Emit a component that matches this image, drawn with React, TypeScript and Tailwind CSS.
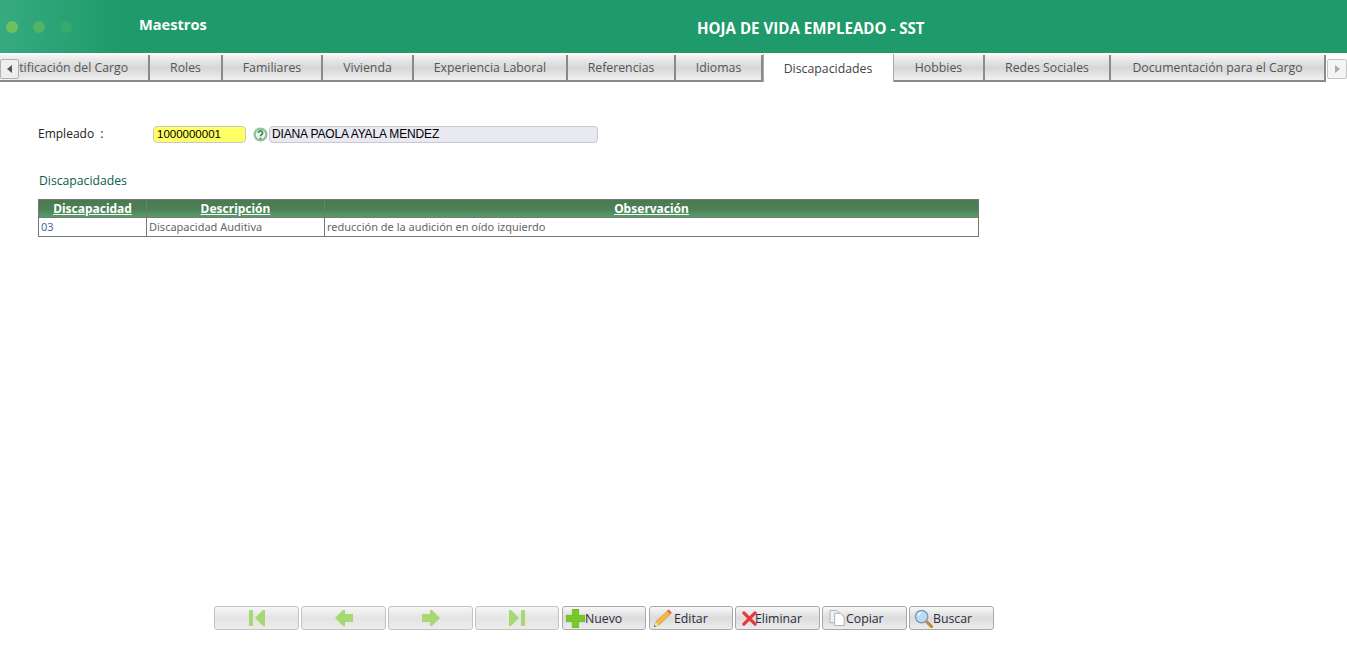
import type { ReactNode } from "react";

const tabs = [
  { label: "Identificación del Cargo", width: "w-[176px]" },
  { label: "Roles", width: "w-[73px]" },
  { label: "Familiares", width: "w-[100px]" },
  { label: "Vivienda", width: "w-[91px]" },
  { label: "Experiencia Laboral", width: "w-[154px]" },
  { label: "Referencias", width: "w-[108px]" },
  { label: "Idiomas", width: "w-[87px]" },
  { label: "Discapacidades", width: "w-[131px]", active: true },
  { label: "Hobbies", width: "w-[91px]" },
  { label: "Redes Sociales", width: "w-[126px]" },
  { label: "Documentación para el Cargo", width: "w-[215px]" },
];

function Tab({ label, width, active }: { label: string; width: string; active?: boolean }) {
  if (active) {
    return (
      <div
        className={`${width} shrink-0 h-[29px] -mt-[2px] pt-[2px] pr-px flex items-center justify-center bg-white border-l border-r border-t border-[#a8a8a8] rounded-t-[2px] text-[12.3px] text-[#444]`}
      >
        {label}
      </div>
    );
  }
  return (
    <div
      className={`${width} shrink-0 h-[27px] pt-[2px] flex items-center justify-center whitespace-nowrap border-r-2 border-b-2 border-[#8a8a8a] bg-gradient-to-b from-[#f4f4f4] via-[#d6d6d6] to-[#f0f0f0] text-[12.3px] text-[#555]`}
    >
      {label}
    </div>
  );
}

function NavButton({ children, className = "w-[85px]" }: { children: ReactNode; className?: string }) {
  return (
    <button className={`${className} h-[24px] flex items-center justify-center rounded-[3px] border border-[#c4c4c4] bg-gradient-to-b from-[#f6f6f6] via-[#e4e4e4] to-[#ececec]`}>
      {children}
    </button>
  );
}

function ActionButton({ icon, label, className }: { icon: ReactNode; label: string; className: string }) {
  return (
    <button
      className={`${className} h-[24px] flex items-center rounded-[3px] border border-[#a8a8a8] bg-gradient-to-b from-[#f8f8f8] via-[#dcdcdc] to-[#ececec] text-[12.3px] text-[#2c2c3c]`}
    >
      {icon}
      <span className="pt-[2px]">{label}</span>
    </button>
  );
}

export default function App() {
  return (
    <div className="relative h-[657px] overflow-hidden bg-white font-['Open_Sans','Noto_Sans',sans-serif]">
      <header className="relative h-[53px] flex items-center bg-[#1f9a6b]">
        <div className="absolute left-0 top-0 h-full w-[120px] bg-gradient-to-r from-[#35ab7f] to-[#1f9a6b]" />
        <div className="relative flex items-center gap-[15px] ml-[6px] w-[133px]">
          <span className="w-[12px] h-[12px] rounded-full bg-[#6fbf5f]" />
          <span className="w-[12px] h-[12px] rounded-full bg-[#4fb566]" />
          <span className="w-[12px] h-[12px] rounded-full bg-[#36a96e]" />
        </div>
        <span className="relative text-[14.6px] font-bold text-white -mt-[4px]">Maestros</span>
        <h1 className="absolute left-[697px] top-[18px] text-[15.1px] leading-[20px] font-bold text-white">
          HOJA DE VIDA EMPLEADO - SST
        </h1>
      </header>

      <nav className="relative h-[29px] mt-px">
        <div className="absolute inset-x-0 top-0 h-[29px] pt-[1px] pr-[21px] flex justify-end overflow-hidden">
          {tabs.map((t) => (
            <Tab key={t.label} label={t.label} width={t.width} active={t.active} />
          ))}
        </div>
        <div className="absolute left-0 top-[5px] w-[19px] h-[20px] flex items-center justify-center bg-[#eeeeee] border border-[#b0b0b0] rounded-[2px]">
          <span className="border-y-[4px] border-r-[5px] border-y-transparent border-r-[#555]" />
        </div>
        <div className="absolute right-0 top-[5px] w-[20px] h-[20px] flex items-center justify-center bg-[#f4f4f4] border border-[#c4c4c4] rounded-[2px]">
          <span className="border-y-[4px] border-l-[5px] border-y-transparent border-l-[#aaa]" />
        </div>
      </nav>

      <main className="pl-[38px] pt-[41px]">
        <div className="flex items-center h-[20px]">
          <label className="w-[115px] text-[12px] text-[#222]">Empleado&nbsp;&nbsp;:</label>
          <div className="w-[93px] h-[17px] flex items-center pl-[3px] pt-px rounded-[4px] border border-[#c8c8c8] bg-[#ffff66] font-['Liberation_Sans',sans-serif] text-[11.5px] text-black">
            1000000001
          </div>
          <svg viewBox="0 0 16 16" className="w-[15px] h-[15px] ml-[7px]">
            <circle cx="8" cy="8" r="7.5" fill="#8fc29f" />
            <circle cx="8" cy="8" r="5" fill="#eef6ee" />
            <path d="M5.8 6.3a2.2 2.2 0 1 1 3.3 1.9c-.7.4-1.1.8-1.1 1.6" fill="none" stroke="#3f8a5c" strokeWidth="1.9" />
            <circle cx="8" cy="12.2" r="1.1" fill="#3f8a5c" />
          </svg>
          <div className="w-[329px] h-[17px] ml-px flex items-center pl-[2px] rounded-[4px] border border-[#c8c8d0] bg-[#e9e9f1] font-['Liberation_Sans',sans-serif] text-[12px] tracking-[-0.15px] text-black">
            DIANA PAOLA AYALA MENDEZ
          </div>
        </div>

        <h2 className="mt-[28px] ml-px text-[12.2px] leading-[18px] text-[#0b5d4a]">Discapacidades</h2>

        <table className="mt-[9px] w-[941px] table-fixed border-collapse border border-[#777] text-[12px]">
          <thead>
            <tr className="h-[18px] bg-gradient-to-b from-[#4a7a50] via-[#4d7f55] to-[#57a26c] font-['Noto_Sans',sans-serif] text-[12px] text-white">
              <th className="w-[108px] border-r border-[#777] underline font-bold p-0 leading-[16px]">Discapacidad</th>
              <th className="w-[178px] border-r border-[#777] underline font-bold p-0 leading-[16px]">Descripción</th>
              <th className="underline font-bold p-0 leading-[16px]">Observación</th>
            </tr>
          </thead>
          <tbody>
            <tr className="h-[19px] border-t border-[#777] font-['Noto_Sans',sans-serif] text-[11px]">
              <td className="border-r border-[#777] pl-[2px] py-0 text-[#4a6a96]">03</td>
              <td className="border-r border-[#777] pl-[2px] py-0 text-[#666]">Discapacidad Auditiva</td>
              <td className="pl-[2px] py-0 text-[#666]">reducción de la audición en oído izquierdo</td>
            </tr>
          </tbody>
        </table>
      </main>

      <footer className="absolute left-[214px] top-[606px] flex gap-[2px]">
        <NavButton>
          <svg viewBox="0 0 18 18" className="w-[18px] h-[18px]" fill="#a6d873">
            <rect x="1" y="1" width="4" height="16" rx="1" />
            <path d="M7 9 15 1h2v16h-2z" />
          </svg>
        </NavButton>
        <NavButton>
          <svg viewBox="0 0 18 18" className="w-[18px] h-[18px]" fill="#a6d873">
            <path d="M0 9 8 1h2v4h8v8h-8v4H8z" />
          </svg>
        </NavButton>
        <NavButton>
          <svg viewBox="0 0 18 18" className="w-[18px] h-[18px]" fill="#a6d873">
            <path d="M18 9 10 1H8v4H0v8h8v4h2z" />
          </svg>
        </NavButton>
        <NavButton className="w-[84px]">
          <svg viewBox="0 0 18 18" className="w-[18px] h-[18px]" fill="#a6d873">
            <rect x="13" y="1" width="4" height="16" rx="1" />
            <path d="M11 9 3 1H1v16h2z" />
          </svg>
        </NavButton>
        <ActionButton
          label="Nuevo"
          className="w-[84px] ml-px pl-[3px]"
          icon={
            <svg viewBox="0 0 18 18" className="w-[19px] h-[19px]">
              <path d="M6 0h6v6h6v6h-6v6H6v-6H0V6h6z" fill="#78c828" stroke="#5aa818" strokeWidth="0.5" />
            </svg>
          }
        />
        <ActionButton
          label="Editar"
          className="w-[84px] ml-px pl-[3px]"
          icon={
            <svg viewBox="0 0 20 20" className="w-[20px] h-[20px] mr-px">
              <path d="M1 19l1.5-5L15.5 2l3 3L6 17z" fill="#f2b84a" stroke="#c48a2c" strokeWidth="0.6" />
              <path d="M15.5 1.5l3 3-1.5 1.5-3-3z" fill="#e8604e" />
              <path d="M1 19l1.5-5L6 17z" fill="#f6dcae" />
              <path d="M1 19l.6-2 1.4 1.4z" fill="#555" />
            </svg>
          }
        />
        <ActionButton
          label="Eliminar"
          className="w-[85px] pl-[6px]"
          icon={
            <svg viewBox="0 0 16 16" className="w-[15px] h-[15px] -mr-[2px]">
              <path d="M2 2l12 12M14 2 2 14" stroke="#e8383c" strokeWidth="3.4" strokeLinecap="round" />
            </svg>
          }
        />
        <ActionButton
          label="Copiar"
          className="w-[85px] pl-[6px]"
          icon={
            <svg viewBox="0 0 18 18" className="w-[17px] h-[18px]">
              <path d="M1 1h7l3 3v10H1z" fill="#eef1f4" stroke="#a4b0bc" />
              <path d="M6 4h6l4 4v9H6z" fill="#ffffff" stroke="#a4b0bc" />
            </svg>
          }
        />
        <ActionButton
          label="Buscar"
          className="w-[85px] pl-[4px]"
          icon={
            <svg viewBox="0 0 20 20" className="w-[19px] h-[19px]">
              <path d="M12 12l6.5 6.5" stroke="#c28a3a" strokeWidth="3.2" strokeLinecap="round" />
              <circle cx="8" cy="8" r="6.5" fill="#b8dcf8" stroke="#7f97ad" strokeWidth="1.4" />
              <path d="M4.5 7a3.5 3.5 0 0 1 3-3" fill="none" stroke="#ffffff" strokeWidth="1.4" />
            </svg>
          }
        />
      </footer>
    </div>
  );
}
